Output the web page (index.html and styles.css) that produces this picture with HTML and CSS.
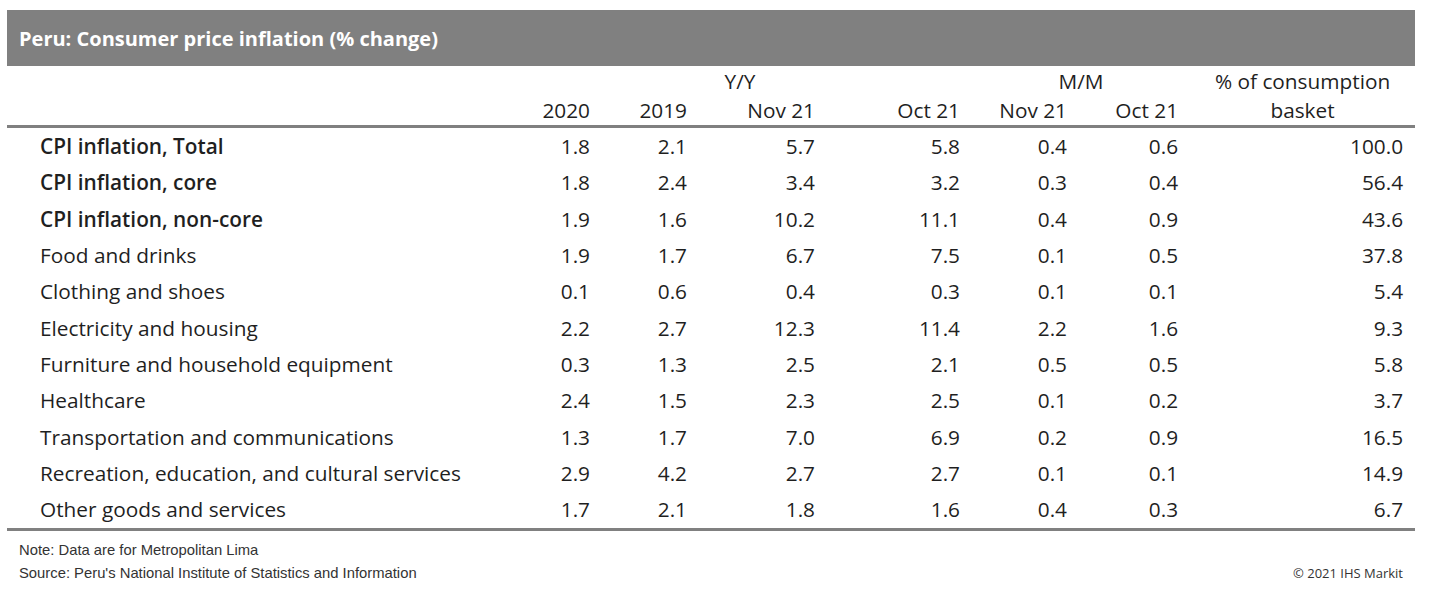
FILE: index.html
```html
<!DOCTYPE html>
<html>
<head>
<meta charset="utf-8">
<link rel="stylesheet" href="styles.css">
</head>
<body>
<div class="wrap">
  <div class="title">Peru: Consumer price inflation (% change)</div>
  <table class="tbl">
    <colgroup>
      <col class="c-label"><col class="c-a"><col class="c-b"><col class="c-c"><col class="c-d"><col class="c-e"><col class="c-f"><col class="c-g">
    </colgroup>
    <thead>
      <tr class="h1">
        <th></th>
        <th colspan="4" class="yy">Y/Y</th>
        <th colspan="2" class="mm">M/M</th>
        <th class="bk">% of consumption</th>
      </tr>
      <tr class="h2">
        <th></th>
        <th>2020</th><th>2019</th><th>Nov 21</th><th>Oct 21</th><th>Nov 21</th><th>Oct 21</th>
        <th class="bk">basket</th>
      </tr>
    </thead>
    <tbody>
      <tr class="b"><td>CPI inflation, Total</td><td>1.8</td><td>2.1</td><td>5.7</td><td>5.8</td><td>0.4</td><td>0.6</td><td>100.0</td></tr>
      <tr class="b"><td>CPI inflation, core</td><td>1.8</td><td>2.4</td><td>3.4</td><td>3.2</td><td>0.3</td><td>0.4</td><td>56.4</td></tr>
      <tr class="b"><td>CPI inflation, non-core</td><td>1.9</td><td>1.6</td><td>10.2</td><td>11.1</td><td>0.4</td><td>0.9</td><td>43.6</td></tr>
      <tr><td>Food and drinks</td><td>1.9</td><td>1.7</td><td>6.7</td><td>7.5</td><td>0.1</td><td>0.5</td><td>37.8</td></tr>
      <tr><td>Clothing and shoes</td><td>0.1</td><td>0.6</td><td>0.4</td><td>0.3</td><td>0.1</td><td>0.1</td><td>5.4</td></tr>
      <tr><td>Electricity and housing</td><td>2.2</td><td>2.7</td><td>12.3</td><td>11.4</td><td>2.2</td><td>1.6</td><td>9.3</td></tr>
      <tr><td>Furniture and household equipment</td><td>0.3</td><td>1.3</td><td>2.5</td><td>2.1</td><td>0.5</td><td>0.5</td><td>5.8</td></tr>
      <tr><td>Healthcare</td><td>2.4</td><td>1.5</td><td>2.3</td><td>2.5</td><td>0.1</td><td>0.2</td><td>3.7</td></tr>
      <tr><td>Transportation and communications</td><td>1.3</td><td>1.7</td><td>7.0</td><td>6.9</td><td>0.2</td><td>0.9</td><td>16.5</td></tr>
      <tr><td>Recreation, education, and cultural services</td><td>2.9</td><td>4.2</td><td>2.7</td><td>2.7</td><td>0.1</td><td>0.1</td><td>14.9</td></tr>
      <tr><td>Other goods and services</td><td>1.7</td><td>2.1</td><td>1.8</td><td>1.6</td><td>0.4</td><td>0.3</td><td>6.7</td></tr>
    </tbody>
  </table>
  <div class="foot">
    <div class="notes">
      <div class="note">Note: Data are for Metropolitan Lima</div>
      <div class="note">Source: Peru's National Institute of Statistics and Information</div>
    </div>
    <div class="copy">© 2021 IHS Markit</div>
  </div>
</div>
</body>
</html>
```
FILE: styles.css
```css
html, body { margin: 0; padding: 0; background: #fff; }
.wrap { width: 1408px; margin-left: 7px; padding-top: 10px; font-family: "Open Sans", "Noto Sans", sans-serif; color: #1f1f1f; }
.title { background: #808080; color: #fff; font-weight: 700; font-size: 20px; height: 56px; line-height: 58px; padding-left: 12px; box-sizing: border-box; }
.tbl { width: 1408px; border-collapse: collapse; table-layout: fixed; font-size: 20.8px; }
.c-label { width: 483px; }
.c-a { width: 100px; }
.c-b { width: 97px; }
.c-c { width: 128px; }
.c-d { width: 145px; }
.c-e { width: 107px; }
.c-f { width: 111px; }
.c-g { width: 237px; }
.tbl th, .tbl td { padding: 0; text-align: right; white-space: nowrap; }
.tbl th { font-weight: 400; height: 30px; }
.h1 th { height: 29px; }
.tbl th.yy { text-align: center; padding-left: 30px; }
.tbl th.mm { text-align: center; padding-left: 24px; }
.tbl th.bk { text-align: center; padding-left: 12px; }
.h2 th { border-bottom: 3px solid #808080; }
.tbl td { height: 34.3px; padding-bottom: 2px; }
.tbl td:first-child { text-align: left; padding-left: 33px; }
.tbl td:last-child { padding-right: 12px; }
.tbl tr.b td:first-child { font-weight: 600; }
.tbl tbody tr:first-child td { height: 35.3px; }
.tbl tbody tr:last-child td { border-bottom: 3px solid #808080; }
.foot { display: flex; justify-content: space-between; align-items: flex-end; padding: 8px 12px 0 12px; }
.note { font-family: "Liberation Sans", Arial, sans-serif; font-size: 14.8px; color: #333; height: 23px; line-height: 23px; }
.copy { font-family: "Open Sans", sans-serif; font-size: 13px; color: #333; line-height: 23px; }
```
